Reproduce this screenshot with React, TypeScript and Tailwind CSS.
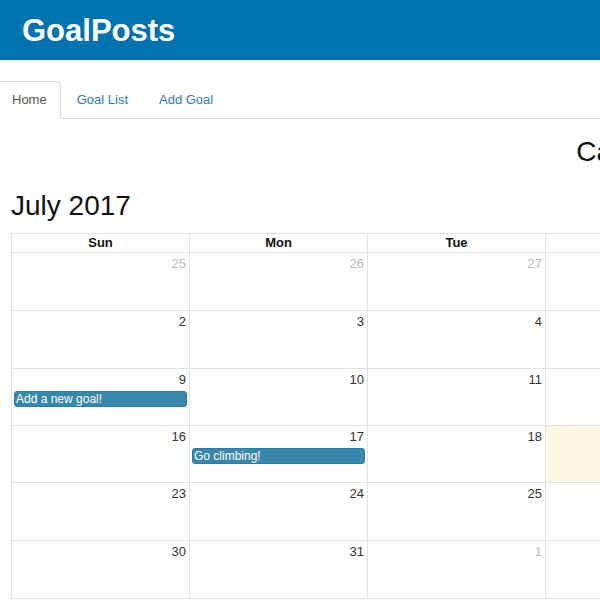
import React from "react";

type Cell = { d: number; other?: boolean; today?: boolean; event?: string };

const weeks: Cell[][] = [
  [{ d: 25, other: true }, { d: 26, other: true }, { d: 27, other: true }, { d: 28, other: true }, { d: 29, other: true }, { d: 30, other: true }, { d: 1 }],
  [{ d: 2 }, { d: 3 }, { d: 4 }, { d: 5 }, { d: 6 }, { d: 7 }, { d: 8 }],
  [{ d: 9, event: "Add a new goal!" }, { d: 10 }, { d: 11 }, { d: 12 }, { d: 13 }, { d: 14 }, { d: 15 }],
  [{ d: 16 }, { d: 17, event: "Go climbing!" }, { d: 18 }, { d: 19, today: true }, { d: 20 }, { d: 21 }, { d: 22 }],
  [{ d: 23 }, { d: 24 }, { d: 25 }, { d: 26 }, { d: 27 }, { d: 28 }, { d: 29 }],
  [{ d: 30 }, { d: 31 }, { d: 1, other: true }, { d: 2, other: true }, { d: 3, other: true }, { d: 4, other: true }, { d: 5, other: true }],
];

const rowHeights = ["h-[58px]", "h-[58px]", "h-[57px]", "h-[57px]", "h-[58px]", "h-[58px]"];
const days = ["Sun", "Mon", "Tue", "Wed", "Thu", "Fri", "Sat"];

export default function App() {
  return (
    <div
      className="w-[600px] h-[600px] overflow-hidden bg-white text-[#333]"
      style={{ fontFamily: '"Liberation Sans", Arial, sans-serif' }}
    >
      <div className="w-[1268px]">
        <div className="h-[60px] bg-[#0072b0] flex items-center px-[22px] pt-[1px]">
          <span className="text-white font-bold text-[31px] leading-none">GoalPosts</span>
        </div>

        <div className="mt-[21px] flex border-b border-[#ddd] h-[38px]">
          <div className="ml-[-2px] flex">
            <div className="h-[38px] px-[13px] border border-[#ddd] border-b-white bg-white rounded-t-[4px] flex items-center text-[13px] text-[#555]">
              Home
            </div>
            <div className="ml-[1px] h-[37px] px-[15px] flex items-center text-[13px] text-[#337ab7]">Goal List</div>
            <div className="ml-[1px] h-[37px] px-[15px] flex items-center text-[13px] text-[#337ab7]">Add Goal</div>
          </div>
        </div>

        <div className="h-[66px] flex items-center justify-center text-[28px] text-[#111]">
          <span className="ml-[-2px]">Calendar</span>
        </div>
        <div className="h-[42px] flex items-center px-[11px] text-[28px] text-[#111]">July 2017</div>

        <div className="mt-[6px] ml-[11px] w-[1247px] border-r border-b border-[#e2e2e2]">
          <div className="flex h-[19px]">
            {days.map((d) => (
              <div
                key={d}
                className="w-[178px] border-l border-t border-[#e2e2e2] flex items-center justify-center text-[13px] font-bold text-[#111]"
              >
                {d}
              </div>
            ))}
          </div>
          {weeks.map((w, i) => (
            <div key={i} className={`flex ${rowHeights[i]}`}>
              {w.map((c, j) => (
                <div
                  key={j}
                  className={`w-[178px] border-l border-t border-[#e2e2e2] flex flex-col ${c.today ? "bg-[#fcf8e3]" : "bg-white"}`}
                >
                  <div
                    className={`text-right pr-[3px] pt-[3px] text-[13px] leading-[16px] ${c.other ? "text-[#bbb]" : "text-[#333]"}`}
                  >
                    {c.d}
                  </div>
                  {c.event && (
                    <div className="mx-[2px] mt-[3px] h-[16px] bg-[#3a87ad] border border-[#2f7aa0] rounded-[3px] text-white text-[12px] leading-[14px] pl-[1px]">
                      {c.event}
                    </div>
                  )}
                </div>
              ))}
            </div>
          ))}
        </div>
      </div>
    </div>
  );
}
